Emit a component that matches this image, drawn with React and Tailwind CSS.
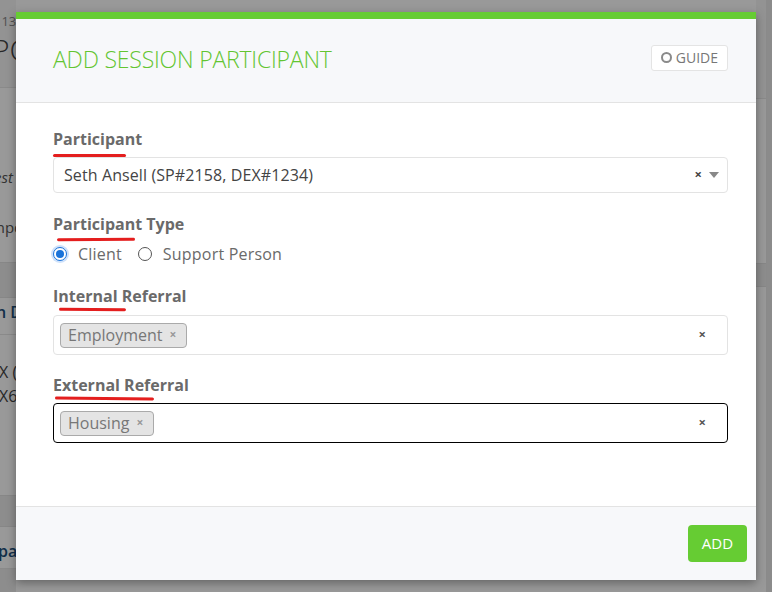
import React from 'react';

// red marker strokes under the labels
const Mark = ({ left, width, top = 26, tilt = 'rotate-[0.6deg]' }) => (
  <span
    className={`absolute h-[3px] rounded-full bg-[#e41e1e] ${tilt}`}
    style={{ left, width, top }}
  />
);

const Label = ({ children, mark }) => (
  <div className="relative h-[24px] text-[16px] font-bold leading-[24px] text-[#6a6a6a]">
    {children}
    {mark}
  </div>
);

const Tag = ({ children }) => (
  <span className="flex h-[25px] items-center gap-[7px] rounded-[4px] border border-[#aaaaaa] bg-[#e4e4e4] pl-[7px] pr-[10px] text-[16px] text-[#777777]">
    {children}
    <span className="text-[12px] font-bold text-[#999999]">×</span>
  </span>
);

const MultiSelect = ({ tag, focused }) => (
  <div
    className={`flex h-[40px] items-center justify-between rounded-[4px] border pl-[6px] pr-[21px] ${
      focused ? 'border-black' : 'border-[#e3e3e3]'
    }`}
  >
    <Tag>{tag}</Tag>
    <span className="text-[13px] font-bold text-[#555555]">×</span>
  </div>
);

const Radio = ({ checked, label }) => (
  <label className="flex items-center gap-[11px]">
    <span
      className={`flex h-[14px] w-[14px] items-center justify-center rounded-full border ${
        checked ? 'border-[#1a73d9] bg-white ring-2 ring-[#cfe2fb]' : 'border-[#555555]'
      }`}
    >
      {checked && <span className="h-[8px] w-[8px] rounded-full bg-[#1a73d9]" />}
    </span>
    <span className="text-[16px] tracking-[0.2px] text-[#6a6a6a]">{label}</span>
  </label>
);

const BackgroundPage = () => (
  <div className="flex h-full w-full bg-white">
    <div className="flex w-[16px] flex-col overflow-hidden whitespace-nowrap text-[#555555]">
      <div className="h-[88px] border-b border-[#e6e6e6] bg-[#f5f5f5] pt-[13px]">
        <div className="ml-[-6px] text-[13px] leading-[16px] text-[#888888]">113</div>
        <div className="ml-[-8px] mt-[6px] text-[30px] font-light leading-[30px] text-[#444444]">PO</div>
      </div>
      <div className="h-[174px] pt-[78px]">
        <div className="ml-[-6px] text-[15px] italic">est</div>
        <div className="ml-[-9px] mt-[27px] text-[15px]">mpo</div>
      </div>
      <div className="h-[36px] border-y border-[#e2e2e2] bg-[#ececec]" />
      <div className="h-[37px] border-b border-[#e6e6e6] pt-[2px]">
        <div className="ml-[-4px] text-[16px] font-semibold text-[#1d4f7a]">n D</div>
      </div>
      <div className="h-[160px] pt-[25px] text-[16px] text-[#444444]">
        <div className="ml-[-1px] leading-[24px]">X (</div>
        <div className="ml-[-1px] leading-[24px]">X6</div>
      </div>
      <div className="h-[32px] border-y border-[#e2e2e2] bg-[#ececec]" />
      <div className="h-[42px] border-b border-[#e6e6e6] pt-[12px]">
        <div className="ml-[-2px] text-[16px] font-semibold text-[#1d4f7a]">pa</div>
      </div>
      <div className="flex-1 bg-[#ececec]" />
    </div>
    <div className="flex-1" />
    <div className="flex w-[16px]">
      <div className="flex w-[10px] flex-col">
        <div className="h-[99px] border-b border-[#e6e6e6] bg-[#f5f5f5]" />
        <div className="h-[164px]" />
        <div className="h-[24px] border-y border-[#e2e2e2] bg-[#ececec]" />
      </div>
      <div className="w-[6px] bg-[#e8e8e8]" />
    </div>
  </div>
);

export default function App() {
  return (
    <div className="relative h-[592px] w-[772px] overflow-hidden font-['Open_Sans',sans-serif]">
      <BackgroundPage />
      <div className="absolute inset-0 bg-black/40" />

      {/* modal */}
      <div className="absolute left-[16px] top-[12px] flex h-[568px] w-[740px] flex-col bg-white shadow-[0_3px_9px_rgba(0,0,0,0.35)]">
        <div className="h-[7px] bg-[#66cc33]" />
        <div className="flex h-[84px] items-center justify-between border-b border-[#e3e3e3] bg-[#f7f8fa] pl-[37px] pr-[28px]">
          <h2 className="mt-[-2px] text-[23px] font-light tracking-[-0.2px] text-[#63c531]">
            ADD SESSION PARTICIPANT
          </h2>
          <button className="mt-[-6px] flex h-[26px] items-center gap-[4px] rounded-[3px] border border-[#e4e4e4] bg-white px-[9px] text-[14px] text-[#777777]">
            <span className="h-[11px] w-[11px] rounded-full border-2 border-[#8a8a8a]" />
            GUIDE
          </button>
        </div>

        <div className="flex-1 pl-[37px] pr-[28px] pt-[24px]">
          <Label mark={<Mark left={0} width={73} top={27} tilt="rotate-[0deg]" />}>Participant</Label>
          <div className="mt-[6px] flex h-[36px] items-center justify-between rounded-[4px] border border-[#e3e3e3] pl-[10px] pr-[8px]">
            <span className="text-[16px] tracking-[0.1px] text-[#444444]">Seth Ansell (SP#2158, DEX#1234)</span>
            <span className="flex items-center gap-[7px]">
              <span className="text-[13px] font-bold text-[#444444]">×</span>
              <span className="h-0 w-0 border-x-[5px] border-t-[6px] border-x-transparent border-t-[#888888]" />
            </span>
          </div>

          <div className="mt-[19px]">
            <Label mark={<Mark left={4} width={78} top={26} tilt="rotate-[-0.5deg]" />}>Participant Type</Label>
          </div>
          <div className="mt-[8px] flex h-[20px] items-center gap-[16px]">
            <Radio checked label="Client" />
            <Radio label="Support Person" />
          </div>

          <div className="mt-[20px]">
            <Label mark={<Mark left={6} width={67} top={24} tilt="rotate-[0.5deg]" />}>Internal Referral</Label>
          </div>
          <div className="mt-[7px]">
            <MultiSelect tag="Employment" />
          </div>

          <div className="mt-[18px]">
            <Label mark={<Mark left={2} width={99} top={24} tilt="rotate-[0.7deg]" />}>External Referral</Label>
          </div>
          <div className="mt-[6px]">
            <MultiSelect tag="Housing" focused />
          </div>
        </div>

        <div className="flex h-[74px] items-center justify-end border-t border-[#e3e3e3] bg-[#f7f8fa] pr-[9px]">
          <button className="h-[37px] w-[59px] rounded-[4px] bg-[#66cc33] text-[15px] text-white">ADD</button>
        </div>
      </div>
    </div>
  );
}
